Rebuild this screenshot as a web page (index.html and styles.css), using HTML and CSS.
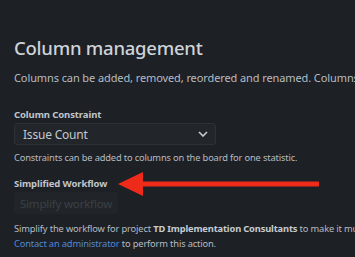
FILE: index.html
```html
<!DOCTYPE html>
<html lang="en">
<head>
    <meta charset="UTF-8">
    <title>Column management</title>
    <link rel="stylesheet" href="styles.css">
</head>
<body>
    <div class="page">
        <h1 class="title">Column management</h1>
        <p class="lead">Columns can be added, removed, reordered and renamed. Columns are based upon global statuses.</p>

        <div class="field">
            <label class="field-label">Column Constraint</label>
            <div class="select">
                <span>Issue Count</span>
                <svg class="chevron" width="10" height="6" viewBox="0 0 10 6"><path d="M1 1l4 4 4-4" fill="none" stroke="#c7ccd1" stroke-width="1.6"/></svg>
            </div>
            <p class="hint">Constraints can be added to columns on the board for one statistic.</p>
        </div>

        <div class="field workflow">
            <div class="field-label">Simplified Workflow</div>
            <button class="btn" disabled>Simplify workflow</button>
            <p class="hint">Simplify the workflow for project <b>TD Implementation Consultants</b> to make it much easier to use.</p>
            <p class="hint"><a href="#">Contact an administrator</a> to perform this action.</p>

            <svg class="arrow" width="202" height="26" viewBox="0 0 202 26">
                <polygon points="0,12 25,0 25,24" fill="#ee2a1b"/>
                <rect x="24" y="9.5" width="177" height="5" fill="#ee2a1b"/>
            </svg>
        </div>
    </div>
</body>
</html>
```

FILE: styles.css
```css
body {
    margin: 0;
    background: #1d2025;
    font-family: "Noto Sans", "Open Sans", sans-serif;
    color: #b6bcc3;
    overflow: hidden;
}
.page {
    padding: 35px 0 0 14px;
    width: 341px;
    overflow: hidden;
}
.title {
    font-size: 18.5px;
    font-weight: 500;
    letter-spacing: -0.25px;
    color: #cdd3d9;
    margin: 0;
    line-height: 26px;
}
.lead {
    font-size: 11px;
    letter-spacing: -0.1px;
    margin: 9px 0 0;
    line-height: 16px;
    white-space: nowrap;
}
.field {
    margin-top: 22px;
}
.field-label {
    display: block;
    font-size: 9.5px;
    font-weight: 700;
    letter-spacing: -0.1px;
    color: #c0c6cc;
    line-height: 14px;
}
.select {
    height: 20px;
    margin-top: 1px;
    border: 1px solid #2e3238;
    border-radius: 3px;
    background: #22262b;
    display: flex;
    align-items: center;
    justify-content: space-between;
    padding: 0 8px;
    box-sizing: content-box;
    width: 184px;
    font-size: 12px;
    letter-spacing: -0.2px;
    color: #c3c9cf;
}
.chevron {
    margin-right: -1px;
}
.hint {
    font-size: 9.3px;
    letter-spacing: -0.15px;
    margin: 6px 0 0;
    line-height: 14px;
    white-space: nowrap;
}
.hint b {
    color: #c6ccd2;
}
.hint a {
    color: #5088d8;
    text-decoration: none;
}
.workflow {
    position: relative;
    margin-top: 12px;
}
.btn {
    margin-top: 1px;
    height: 22px;
    width: 104px;
    border: none;
    border-radius: 3px;
    background: #212529;
    color: #3b4046;
    font-family: inherit;
    font-size: 11.5px;
    letter-spacing: -0.2px;
    padding: 0;
    display: block;
}
.workflow .hint {
    margin-top: 0;
    line-height: 15px;
}
.workflow .btn + .hint {
    margin-top: 7px;
}
.arrow {
    position: absolute;
    left: 104px;
    top: -5px;
}
```
